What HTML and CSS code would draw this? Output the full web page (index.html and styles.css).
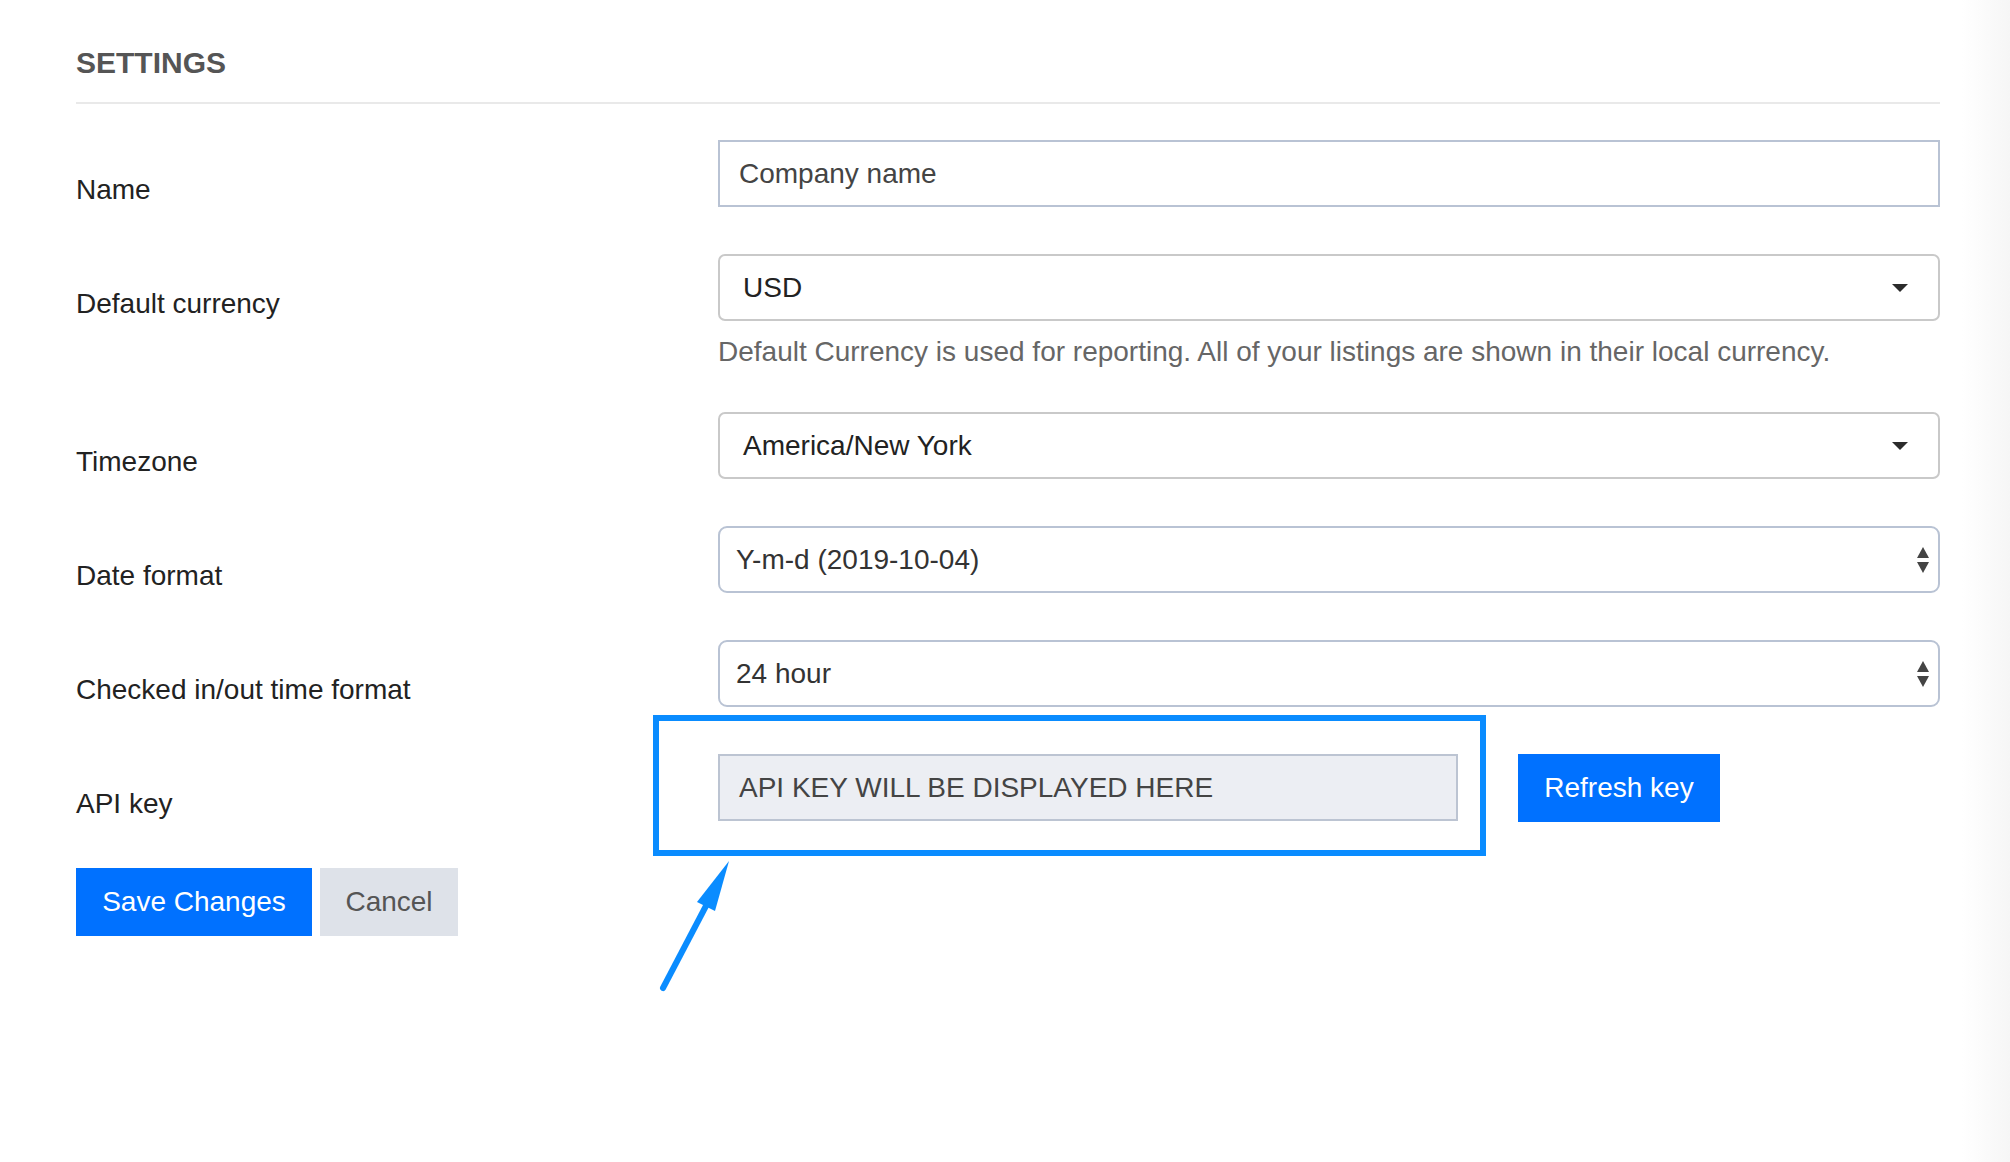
FILE: index.html
```html
<!DOCTYPE html>
<html lang="en">
<head>
<meta charset="utf-8">
<title>Settings</title>
<link rel="stylesheet" href="styles.css">
</head>
<body>
<div class="page">
  <h1 class="title">SETTINGS</h1>
  <div class="form">
    <div class="row">
      <label class="label">Name</label>
      <div class="field">
        <div class="input text-input">Company name</div>
      </div>
    </div>
    <div class="row">
      <label class="label">Default currency</label>
      <div class="field">
        <div class="input select gray">
          <span class="value">USD</span>
          <svg class="caret" width="16" height="8" viewBox="0 0 16 8"><path d="M0 0H16L8 8Z" fill="#2b2b2b"/></svg>
        </div>
        <p class="help">Default Currency is used for reporting. All of your listings are shown in their local currency.</p>
      </div>
    </div>
    <div class="row">
      <label class="label">Timezone</label>
      <div class="field">
        <div class="input select gray">
          <span class="value">America/New York</span>
          <svg class="caret" width="16" height="8" viewBox="0 0 16 8"><path d="M0 0H16L8 8Z" fill="#2b2b2b"/></svg>
        </div>
      </div>
    </div>
    <div class="row">
      <label class="label">Date format</label>
      <div class="field">
        <div class="input select native">
          <span class="value">Y-m-d (2019-10-04)</span>
          <svg class="spinner" width="12" height="26" viewBox="0 0 12 26"><path d="M6 0L12 11H0Z" fill="#444"/><path d="M0 15H12L6 26Z" fill="#444"/></svg>
        </div>
      </div>
    </div>
    <div class="row">
      <label class="label">Checked in/out time format</label>
      <div class="field">
        <div class="input select native">
          <span class="value">24 hour</span>
          <svg class="spinner" width="12" height="26" viewBox="0 0 12 26"><path d="M6 0L12 11H0Z" fill="#444"/><path d="M0 15H12L6 26Z" fill="#444"/></svg>
        </div>
      </div>
    </div>
    <div class="row">
      <label class="label">API key</label>
      <div class="field api">
        <div class="input text-input readonly">API KEY WILL BE DISPLAYED HERE</div>
        <button class="btn primary">Refresh key</button>
      </div>
    </div>
    <div class="actions">
      <button class="btn primary">Save Changes</button>
      <button class="btn secondary">Cancel</button>
    </div>
  </div>

  <div class="highlight"></div>
  <svg class="pointer" width="120" height="160" viewBox="0 0 120 160">
    <line x1="23" y1="148" x2="67" y2="64" stroke="#0a8cff" stroke-width="6" stroke-linecap="round"/>
    <path d="M89 21L57 62L75 71Z" fill="#0a8cff"/>
  </svg>
</div>
</body>
</html>
```

FILE: styles.css
```css
html, body {
  margin: 0;
  padding: 0;
}

body {
  font-family: "Liberation Sans", Arial, Helvetica, sans-serif;
  background: linear-gradient(to right, #ffffff 1962px, #fafafa 1988px, #f6f6f6 2010px);
  min-height: 1162px;
  color: #222;
}

.page {
  position: relative;
  width: 1864px;
  padding-left: 76px;
}

.title {
  margin: 0;
  padding-top: 46px;
  padding-bottom: 22px;
  font-size: 30px;
  line-height: 34px;
  font-weight: 700;
  color: #555;
  border-bottom: 2px solid #e9e9e9;
}

.form {
  margin-top: 36px;
  display: flex;
  flex-direction: column;
  gap: 47px;
}

.row {
  display: grid;
  grid-template-columns: 642px 1222px;
}

.label {
  padding-top: 34px;
  font-size: 28px;
  line-height: 32px;
  color: #222;
}

.field {
  display: flex;
  flex-direction: column;
}

.input {
  box-sizing: border-box;
  height: 67px;
  display: flex;
  align-items: center;
  font-size: 28px;
  line-height: 32px;
  background: #fff;
}

.text-input {
  border: 2px solid #b9c3d4;
  padding-left: 19px;
  color: #444;
}

.select {
  justify-content: space-between;
  color: #222;
}

.select.gray {
  border: 2px solid #c9c9c9;
  border-radius: 7px;
  padding-left: 23px;
  padding-right: 30px;
}

.select.native {
  border: 2px solid #b9c3d4;
  border-radius: 9px;
  padding-left: 16px;
  padding-right: 9px;
  color: #333;
}

.help {
  margin: 18px 0 0;
  font-size: 28px;
  line-height: 26px;
  color: #666;
}

.field.api {
  flex-direction: row;
  align-items: flex-start;
  gap: 60px;
  height: 67px;
}

.readonly {
  width: 740px;
  background: #eceef3;
  border-color: #bcc4d2;
}

.btn {
  box-sizing: border-box;
  height: 68px;
  border: none;
  border-radius: 0;
  padding: 0 26px;
  font-family: "Liberation Sans", Arial, Helvetica, sans-serif;
  font-size: 28px;
  line-height: 32px;
  cursor: pointer;
}

.btn.primary {
  background: #0071ff;
  color: #fff;
}

.btn.secondary {
  background: #dee2e9;
  color: #555;
  padding: 0 25px;
}

.field.api .btn {
  width: 202px;
  flex-shrink: 0;
}

.actions {
  display: flex;
  gap: 8px;
}

.actions .btn.primary {
  width: 236px;
}

.actions .btn.secondary {
  width: 138px;
}

.highlight {
  position: absolute;
  left: 653px;
  top: 715px;
  width: 833px;
  height: 141px;
  box-sizing: border-box;
  border: 6px solid #0a8cff;
}

.pointer {
  position: absolute;
  left: 640px;
  top: 840px;
}
```
